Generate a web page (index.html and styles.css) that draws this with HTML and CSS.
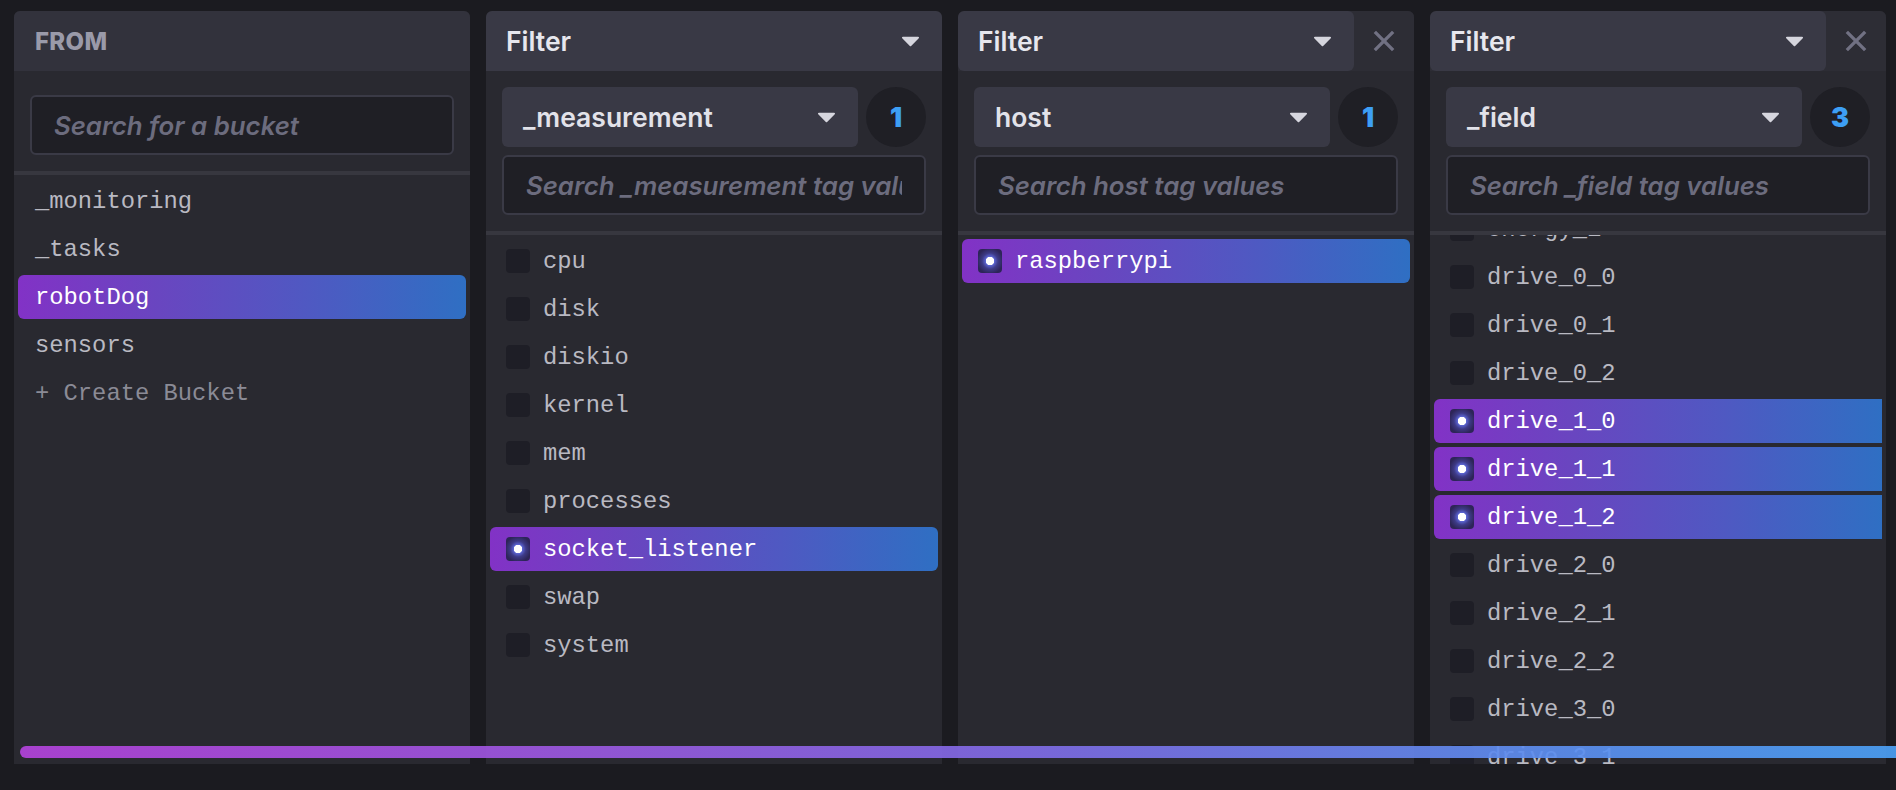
FILE: index.html
```html
<!DOCTYPE html>
<html lang="en">
<head>
<meta charset="utf-8">
<title>Query Builder</title>
<link rel="stylesheet" href="styles.css">
</head>
<body>
<div class="board">
  <section class="card">
    <header class="card-head card-head--title"><span class="title">FROM</span></header>
    <div class="tools tools--from">
      <input class="search" type="text" placeholder="Search for a bucket">
    </div>
    <div class="list">
      <div class="list-inner">
        <div class="item item--plain">_monitoring</div>
        <div class="item item--plain">_tasks</div>
        <div class="item item--plain item--on">robotDog</div>
        <div class="item item--plain">sensors</div>
        <div class="item item--plain item--create">+ Create Bucket</div>
      </div>
    </div>
  </section>

  <section class="card">
    <header class="card-head">
      <div class="fn-drop fn-drop--full"><span>Filter</span><svg class="caret" viewBox="0 0 20 12"><path d="M2 1.5h16a1 1 0 0 1 .7 1.7l-8 8a1 1 0 0 1-1.4 0l-8-8A1 1 0 0 1 2 1.5z"/></svg></div>
    </header>
    <div class="tools">
      <div class="key-row">
        <div class="key-drop"><span>_measurement</span><svg class="caret" viewBox="0 0 20 12"><path d="M2 1.5h16a1 1 0 0 1 .7 1.7l-8 8a1 1 0 0 1-1.4 0l-8-8A1 1 0 0 1 2 1.5z"/></svg></div>
        <div class="badge">1</div>
      </div>
      <input class="search" type="text" placeholder="Search _measurement tag values">
    </div>
    <div class="list">
      <div class="list-inner">
        <div class="item"><span class="box"></span>cpu</div>
        <div class="item"><span class="box"></span>disk</div>
        <div class="item"><span class="box"></span>diskio</div>
        <div class="item"><span class="box"></span>kernel</div>
        <div class="item"><span class="box"></span>mem</div>
        <div class="item"><span class="box"></span>processes</div>
        <div class="item item--on"><span class="box box--on"></span>socket_listener</div>
        <div class="item"><span class="box"></span>swap</div>
        <div class="item"><span class="box"></span>system</div>
      </div>
    </div>
  </section>

  <section class="card">
    <header class="card-head card-head--split">
      <div class="fn-drop"><span>Filter</span><svg class="caret" viewBox="0 0 20 12"><path d="M2 1.5h16a1 1 0 0 1 .7 1.7l-8 8a1 1 0 0 1-1.4 0l-8-8A1 1 0 0 1 2 1.5z"/></svg></div>
      <div class="close"><svg viewBox="0 0 24 24"><path d="M2 2L22 22M22 2L2 22"/></svg></div>
    </header>
    <div class="tools">
      <div class="key-row">
        <div class="key-drop"><span>host</span><svg class="caret" viewBox="0 0 20 12"><path d="M2 1.5h16a1 1 0 0 1 .7 1.7l-8 8a1 1 0 0 1-1.4 0l-8-8A1 1 0 0 1 2 1.5z"/></svg></div>
        <div class="badge">1</div>
      </div>
      <input class="search" type="text" placeholder="Search host tag values">
    </div>
    <div class="list">
      <div class="list-inner">
        <div class="item item--on"><span class="box box--on"></span>raspberrypi</div>
      </div>
    </div>
  </section>

  <section class="card">
    <header class="card-head card-head--split">
      <div class="fn-drop"><span>Filter</span><svg class="caret" viewBox="0 0 20 12"><path d="M2 1.5h16a1 1 0 0 1 .7 1.7l-8 8a1 1 0 0 1-1.4 0l-8-8A1 1 0 0 1 2 1.5z"/></svg></div>
      <div class="close"><svg viewBox="0 0 24 24"><path d="M2 2L22 22M22 2L2 22"/></svg></div>
    </header>
    <div class="tools">
      <div class="key-row">
        <div class="key-drop"><span>_field</span><svg class="caret" viewBox="0 0 20 12"><path d="M2 1.5h16a1 1 0 0 1 .7 1.7l-8 8a1 1 0 0 1-1.4 0l-8-8A1 1 0 0 1 2 1.5z"/></svg></div>
        <div class="badge">3</div>
      </div>
      <input class="search" type="text" placeholder="Search _field tag values">
    </div>
    <div class="list list--clip">
      <div class="list-inner list-inner--scrolled">
        <div class="item"><span class="box"></span>energy_1</div>
        <div class="item"><span class="box"></span>drive_0_0</div>
        <div class="item"><span class="box"></span>drive_0_1</div>
        <div class="item"><span class="box"></span>drive_0_2</div>
        <div class="item item--on"><span class="box box--on"></span>drive_1_0</div>
        <div class="item item--on"><span class="box box--on"></span>drive_1_1</div>
        <div class="item item--on"><span class="box box--on"></span>drive_1_2</div>
        <div class="item"><span class="box"></span>drive_2_0</div>
        <div class="item"><span class="box"></span>drive_2_1</div>
        <div class="item"><span class="box"></span>drive_2_2</div>
        <div class="item"><span class="box"></span>drive_3_0</div>
        <div class="item"><span class="box"></span>drive_3_1</div>
        <div class="item"><span class="box"></span>drive_3_2</div>
      </div>
    </div>
  </section>

  <div class="hscroll"></div>
</div>
</body>
</html>
```

FILE: styles.css
```css
* { box-sizing: border-box; }

html, body {
  margin: 0;
  height: 100%;
  background: #1b1b20;
  overflow: hidden;
  font-family: Inter, "Noto Sans", sans-serif;
}

.board {
  position: relative;
  display: flex;
  gap: 16px;
  padding: 11px 0 0 14px;
  height: 790px;
}

.card {
  width: 456px;
  height: 753px;
  flex: none;
  display: flex;
  flex-direction: column;
  background: #292930;
  border-radius: 6px 6px 0 0;
  overflow: hidden;
}

.card-head {
  height: 60px;
  flex: none;
  display: flex;
  background: #2d2d35;
}

.card-head--title {
  background: #32323c;
  align-items: center;
  padding: 0 21px;
}

.title {
  font-size: 24px;
  font-weight: 800;
  color: #9a9aa9;
  letter-spacing: 0.3px;
}

.fn-drop {
  flex: 1;
  height: 60px;
  display: flex;
  align-items: center;
  justify-content: space-between;
  padding: 0 22px 0 20px;
  background: #393945;
  border-radius: 6px;
  font-size: 26.5px;
  font-weight: 600;
  color: #e7e7ee;
}

.fn-drop--full { border-radius: 6px 6px 0 0; }

.caret {
  width: 19px;
  height: 12px;
  fill: #d6d6de;
  flex: none;
}

.close {
  width: 60px;
  flex: none;
  display: flex;
  align-items: center;
  justify-content: center;
}

.close svg {
  width: 22px;
  height: 22px;
  stroke: #717183;
  stroke-width: 3.6;
  fill: none;
}

.tools {
  flex: none;
  display: flex;
  flex-direction: column;
  gap: 8px;
  padding: 16px;
  border-bottom: 4px solid #37373f;
}

.tools--from { padding-top: 24px; }

.key-row {
  display: flex;
  gap: 8px;
}

.key-drop {
  flex: 1;
  height: 60px;
  display: flex;
  align-items: center;
  justify-content: space-between;
  padding: 0 22px 0 21px;
  background: #393945;
  border-radius: 6px;
  font-size: 26.5px;
  font-weight: 600;
  color: #e2e2e9;
}

.badge {
  width: 60px;
  height: 60px;
  flex: none;
  border-radius: 50%;
  background: #1f1f25;
  display: flex;
  align-items: center;
  justify-content: center;
  font-size: 27px;
  font-weight: 900;
  color: #3d9ff5;
}

.search {
  display: block;
  width: 100%;
  height: 60px;
  margin: 0;
  padding: 0 22px;
  background: #1f1f25;
  border: 2px solid #3a3a46;
  border-radius: 6px;
  font-family: Inter, "Noto Sans", sans-serif;
  font-size: 25.8px;
  font-weight: 600;
  font-style: italic;
  color: #e2e2e9;
  outline: none;
}

.search::placeholder {
  color: #6c6c7e;
  opacity: 1;
}

.list {
  flex: 1;
  min-height: 0;
  overflow: hidden;
  padding: 4px;
}

.list-inner {
  display: flex;
  flex-direction: column;
  gap: 4px;
}

.list-inner--scrolled { margin-top: -32px; }

.item {
  height: 44px;
  flex: none;
  display: flex;
  align-items: center;
  gap: 13px;
  padding: 0 16px;
  border-radius: 6px;
  font-family: "Liberation Mono", "DejaVu Sans Mono", monospace;
  font-size: 23.8px;
  color: #b9b9c2;
  white-space: nowrap;
}

.item--plain { padding-left: 17px; }

.item--create { color: #8b8b96; }

.item--on {
  color: #ffffff;
  background: linear-gradient(90deg, #8232c6 0%, #6a45c0 30%, #4f59c2 65%, #2f6fc3 100%);
}

.list--clip .item--on { border-radius: 6px 0 0 6px; }

.box {
  width: 24px;
  height: 24px;
  flex: none;
  border-radius: 4px;
  background: #1e1e26;
}

.box--on {
  background:
    radial-gradient(circle at center, #ffffff 0 4px, #5a63d0 4.5px, #3d3a86 8px, #2d2558 13px);
}

.hscroll {
  position: absolute;
  left: 20px;
  right: -20px;
  top: 746px;
  height: 12px;
  border-radius: 6px;
  background: linear-gradient(90deg, #b343dc 0%, #9a58e0 30%, #7d6de6 55%, #5f8bee 78%, #4aa1f6 100%);
  opacity: 0.92;
}
```
